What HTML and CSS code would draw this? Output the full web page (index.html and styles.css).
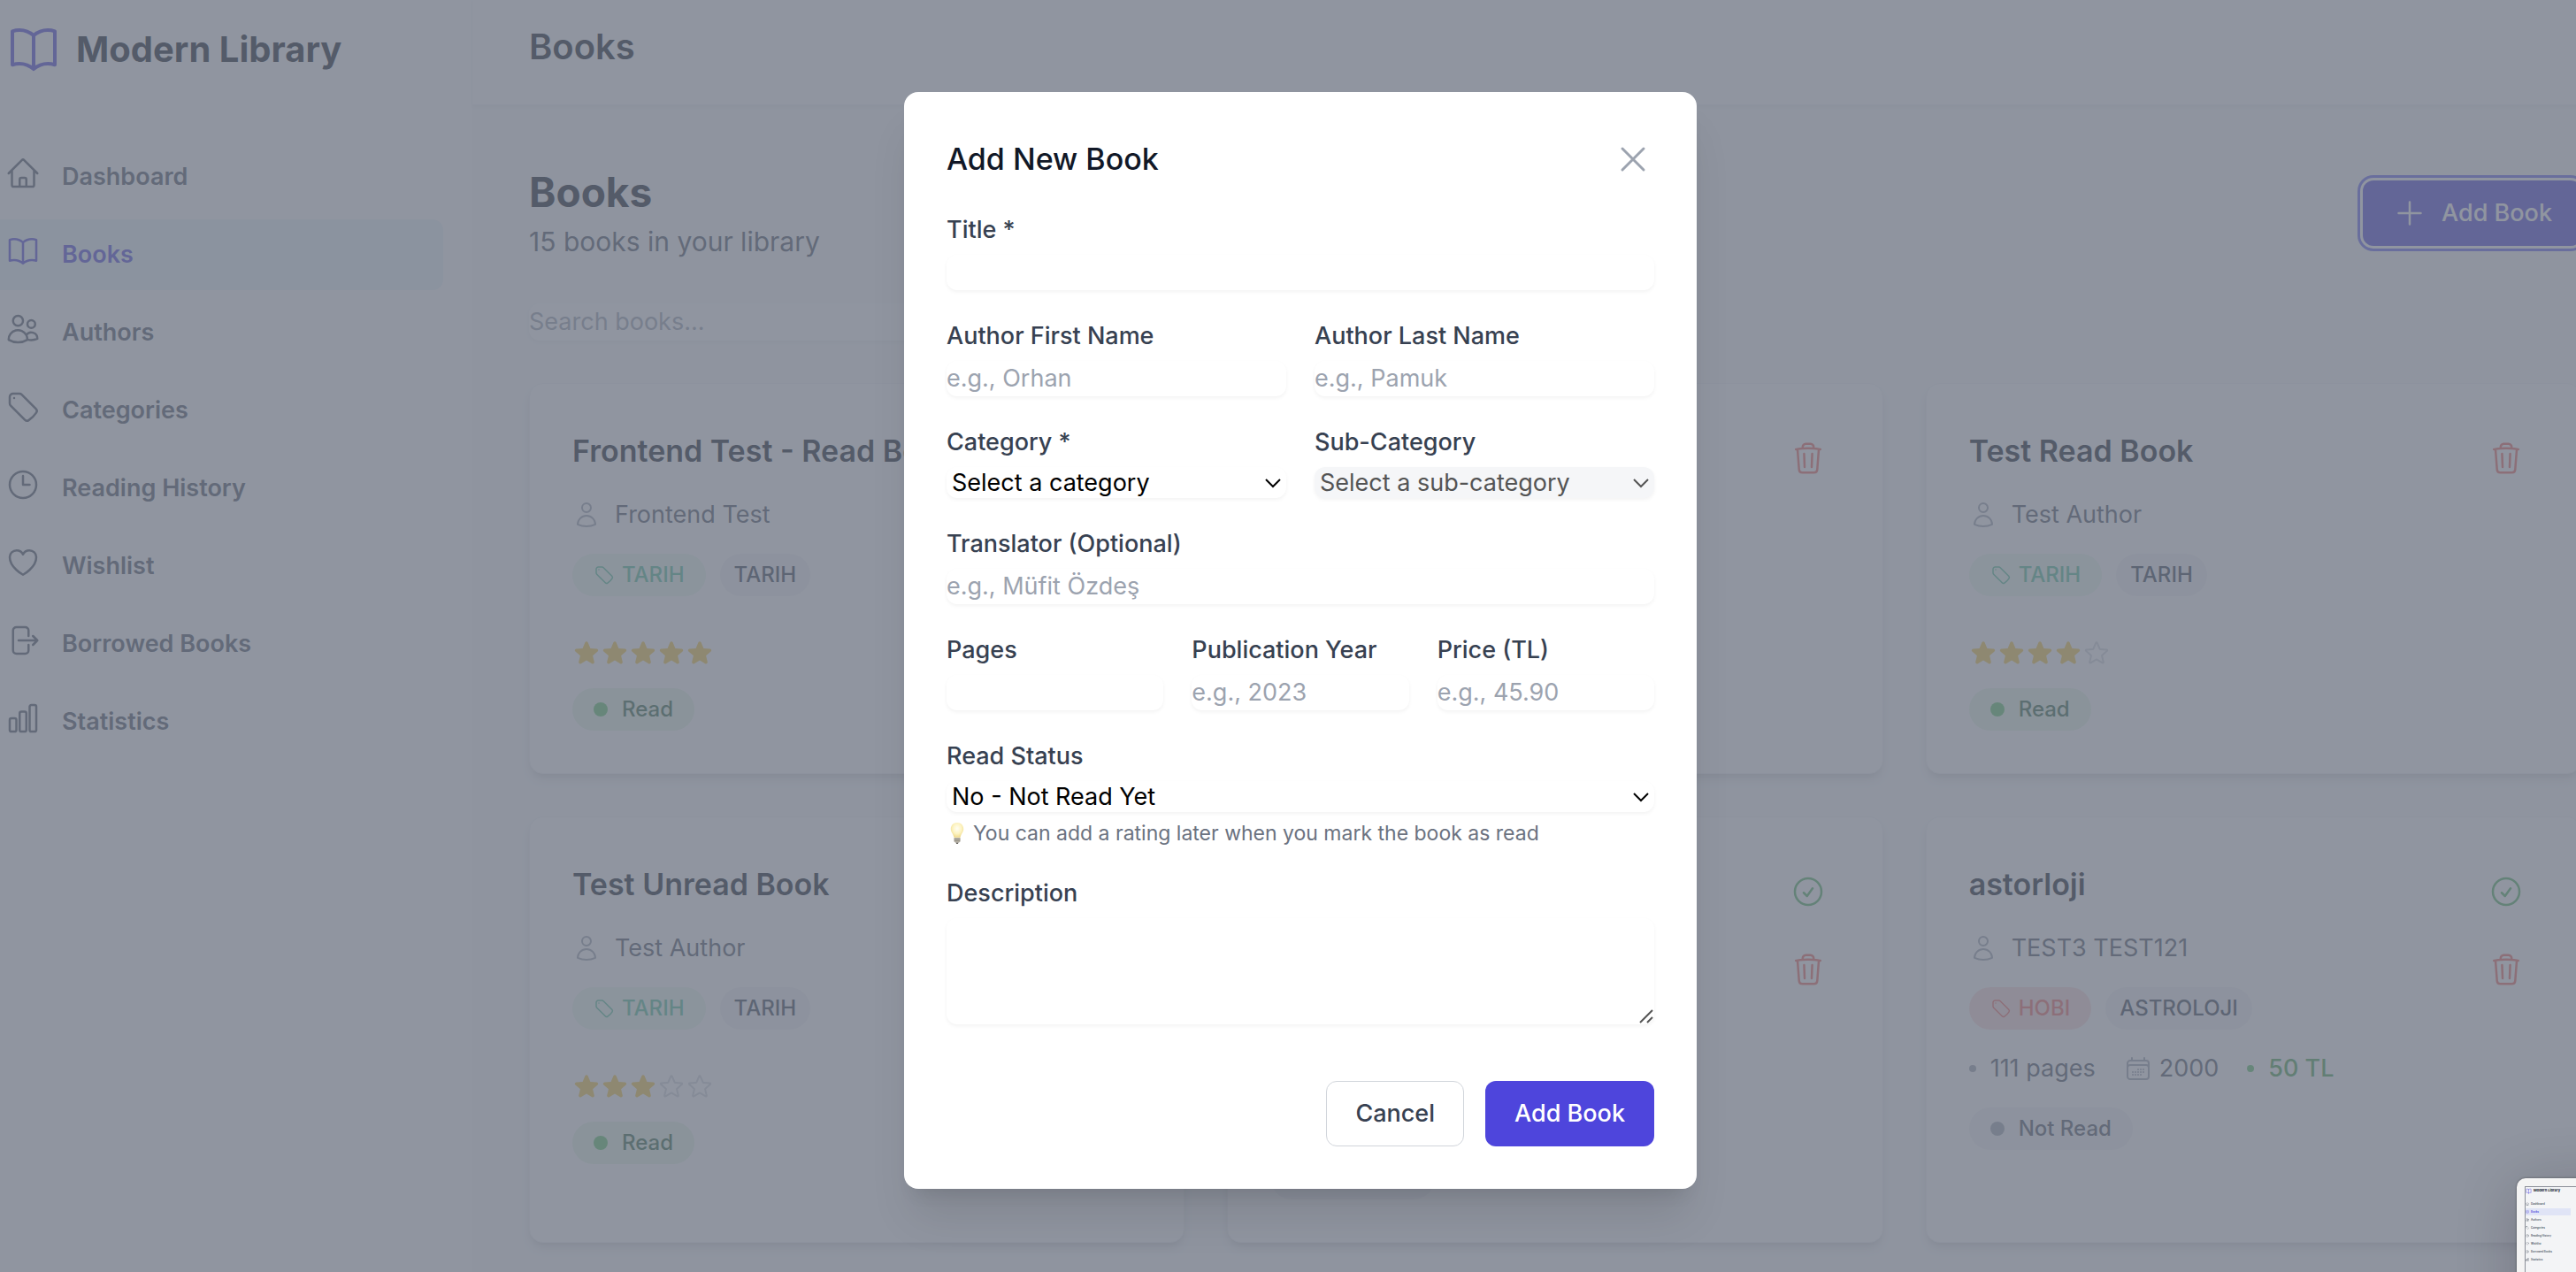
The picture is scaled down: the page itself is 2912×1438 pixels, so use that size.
FILE: index.html
```html
<!DOCTYPE html>
<html lang="en">
<head>
<meta charset="utf-8">
<title>Books - Modern Library</title>
<link rel="stylesheet" href="styles.css">
</head>
<body>
<svg class="sprite" aria-hidden="true">
  <symbol id="i-home" viewBox="0 0 24 24"><path d="m2.25 12 8.954-8.955c.44-.439 1.152-.439 1.591 0L21.75 12M4.5 9.75v10.125c0 .621.504 1.125 1.125 1.125H9.75v-4.875c0-.621.504-1.125 1.125-1.125h2.25c.621 0 1.125.504 1.125 1.125V21h4.125c.621 0 1.125-.504 1.125-1.125V9.75M8.25 21h8.25"/></symbol>
  <symbol id="i-book" viewBox="0 0 24 24"><path d="M12 6.042A8.967 8.967 0 0 0 6 3.75c-1.052 0-2.062.18-3 .512v14.25A8.987 8.987 0 0 1 6 18c2.305 0 4.408.867 6 2.292m0-14.25a8.966 8.966 0 0 1 6-2.292c1.052 0 2.062.18 3 .512v14.25A8.987 8.987 0 0 0 18 18a8.967 8.967 0 0 0-6 2.292m0-14.25v14.25"/></symbol>
  <symbol id="i-users" viewBox="0 0 24 24"><path d="M15 19.128a9.38 9.38 0 0 0 2.625.372 9.337 9.337 0 0 0 4.121-.952 4.125 4.125 0 0 0-7.533-2.493M15 19.128v-.003c0-1.113-.285-2.16-.786-3.07M15 19.128v.106A12.318 12.318 0 0 1 8.624 21c-2.331 0-4.512-.645-6.374-1.766l-.001-.109a6.375 6.375 0 0 1 11.964-3.07M12 6.375a3.375 3.375 0 1 1-6.75 0 3.375 3.375 0 0 1 6.75 0Zm8.25 2.25a2.625 2.625 0 1 1-5.25 0 2.625 2.625 0 0 1 5.25 0Z"/></symbol>
  <symbol id="i-tag" viewBox="0 0 24 24"><path d="M9.568 3H5.25A2.25 2.25 0 0 0 3 5.25v4.318c0 .597.237 1.17.659 1.591l9.581 9.581c.699.699 1.78.872 2.607.33a18.095 18.095 0 0 0 5.223-5.223c.542-.827.369-1.908-.33-2.607L11.16 3.66A2.25 2.25 0 0 0 9.568 3Z"/><path d="M6 6h.008v.008H6V6Z"/></symbol>
  <symbol id="i-clock" viewBox="0 0 24 24"><path d="M12 6v6h4.5m4.5 0a9 9 0 1 1-18 0 9 9 0 0 1 18 0Z"/></symbol>
  <symbol id="i-heart" viewBox="0 0 24 24"><path d="M21 8.25c0-2.485-2.099-4.5-4.688-4.5-1.935 0-3.597 1.126-4.312 2.733-.715-1.607-2.377-2.733-4.313-2.733C5.1 3.75 3 5.765 3 8.25c0 7.22 9 12 9 12s9-4.78 9-12Z"/></symbol>
  <symbol id="i-exit" viewBox="0 0 24 24"><path d="M15.75 9V5.25A2.25 2.25 0 0 0 13.5 3h-6a2.25 2.25 0 0 0-2.25 2.25v13.5A2.25 2.25 0 0 0 7.5 21h6a2.25 2.25 0 0 0 2.25-2.25V15m3 0 3-3m0 0-3-3m3 3H9"/></symbol>
  <symbol id="i-chart" viewBox="0 0 24 24"><path d="M3 13.125C3 12.504 3.504 12 4.125 12h2.25c.621 0 1.125.504 1.125 1.125v6.75C7.5 20.496 6.996 21 6.375 21h-2.25A1.125 1.125 0 0 1 3 19.875v-6.75ZM9.75 8.625c0-.621.504-1.125 1.125-1.125h2.25c.621 0 1.125.504 1.125 1.125v11.25c0 .621-.504 1.125-1.125 1.125h-2.25a1.125 1.125 0 0 1-1.125-1.125V8.625ZM16.5 4.125c0-.621.504-1.125 1.125-1.125h2.25C20.496 3 21 3.504 21 4.125v15.75c0 .621-.504 1.125-1.125 1.125h-2.25a1.125 1.125 0 0 1-1.125-1.125V4.125Z"/></symbol>
  <symbol id="i-user" viewBox="0 0 24 24"><path d="M15.75 6a3.75 3.75 0 1 1-7.5 0 3.75 3.75 0 0 1 7.5 0ZM4.501 20.118a7.5 7.5 0 0 1 14.998 0A17.933 17.933 0 0 1 12 21.75c-2.676 0-5.216-.584-7.499-1.632Z"/></symbol>
  <symbol id="i-star-full" viewBox="0 0 24 24"><path d="M10.788 3.21c.448-1.077 1.976-1.077 2.424 0l2.082 5.006 5.404.434c1.164.093 1.636 1.545.749 2.305l-4.117 3.527 1.257 5.273c.271 1.136-.964 2.033-1.96 1.425L12 18.354 7.373 21.18c-.996.608-2.231-.29-1.96-1.425l1.257-5.273-4.117-3.527c-.887-.76-.415-2.212.749-2.305l5.404-.434 2.082-5.005Z"/></symbol>
  <symbol id="i-star" viewBox="0 0 24 24"><path d="M11.48 3.499a.562.562 0 0 1 1.04 0l2.125 5.111a.563.563 0 0 0 .475.345l5.518.442c.499.04.701.663.321.988l-4.204 3.602a.563.563 0 0 0-.182.557l1.285 5.385a.562.562 0 0 1-.84.61l-4.725-2.885a.562.562 0 0 0-.586 0L6.982 20.54a.562.562 0 0 1-.84-.61l1.285-5.386a.562.562 0 0 0-.182-.557l-4.204-3.602a.562.562 0 0 1 .321-.988l5.518-.442a.563.563 0 0 0 .475-.345L11.48 3.5Z"/></symbol>
  <symbol id="i-trash" viewBox="0 0 24 24"><path d="m14.74 9-.346 9m-4.788 0L9.26 9m9.968-3.21c.342.052.682.107 1.022.166m-1.022-.165L18.16 19.673a2.25 2.25 0 0 1-2.244 2.077H8.084a2.25 2.25 0 0 1-2.244-2.077L4.772 5.79m14.456 0a48.108 48.108 0 0 0-3.478-.397m-12 .562c.34-.059.68-.114 1.022-.165m0 0a48.11 48.11 0 0 1 3.478-.397m7.5 0v-.916c0-1.18-.91-2.164-2.09-2.201a51.964 51.964 0 0 0-3.32 0c-1.18.037-2.09 1.022-2.09 2.201v.916m7.5 0a48.667 48.667 0 0 0-7.5 0"/></symbol>
  <symbol id="i-check" viewBox="0 0 24 24"><path d="M9 12.75 11.25 15 15 9.75M21 12a9 9 0 1 1-18 0 9 9 0 0 1 18 0Z"/></symbol>
  <symbol id="i-calendar" viewBox="0 0 24 24"><path d="M6.75 3v2.25M17.25 3v2.25M3 18.75V7.5a2.25 2.25 0 0 1 2.25-2.25h13.5A2.25 2.25 0 0 1 21 7.5v11.25m-18 0A2.25 2.25 0 0 0 5.25 21h13.5A2.25 2.25 0 0 0 21 18.75m-18 0v-7.5A2.25 2.25 0 0 1 5.25 9h13.5A2.25 2.25 0 0 1 21 11.25v7.5m-9-6h.008v.008H12v-.008ZM12 15h.008v.008H12V15Zm0 2.25h.008v.008H12v-.008ZM9.75 15h.008v.008H9.75V15Zm0 2.25h.008v.008H9.75v-.008ZM7.5 15h.008v.008H7.5V15Zm0 2.25h.008v.008H7.5v-.008Zm6.75-4.5h.008v.008h-.008v-.008Zm0 2.25h.008v.008h-.008V15Zm0 2.25h.008v.008h-.008v-.008Zm2.25-4.5h.008v.008H16.5v-.008Zm0 2.25h.008v.008H16.5V15Z"/></symbol>
  <symbol id="i-plus" viewBox="0 0 24 24"><path d="M12 4.5v15m7.5-7.5h-15"/></symbol>
  <symbol id="i-close" viewBox="0 0 24 24"><path d="M6 18 18 6M6 6l12 12"/></symbol>
  <symbol id="i-chevron" viewBox="0 0 20 12"><path d="M2 2l8 8 8-8"/></symbol>
</svg>

<div class="app">
  <aside class="sidebar">
    <div class="brand">
      <svg class="icon brand-icon"><use href="#i-book"/></svg>
      <span class="brand-name">Modern Library</span>
    </div>
    <nav class="nav">
      <a class="nav-link" href="#dashboard"><svg class="icon icon-40"><use href="#i-home"/></svg>Dashboard</a>
      <a class="nav-link is-active" href="#books" aria-current="page"><svg class="icon icon-40"><use href="#i-book"/></svg>Books</a>
      <a class="nav-link" href="#authors"><svg class="icon icon-40"><use href="#i-users"/></svg>Authors</a>
      <a class="nav-link" href="#categories"><svg class="icon icon-40"><use href="#i-tag"/></svg>Categories</a>
      <a class="nav-link" href="#history"><svg class="icon icon-40"><use href="#i-clock"/></svg>Reading History</a>
      <a class="nav-link" href="#wishlist"><svg class="icon icon-40"><use href="#i-heart"/></svg>Wishlist</a>
      <a class="nav-link" href="#borrowed"><svg class="icon icon-40"><use href="#i-exit"/></svg>Borrowed Books</a>
      <a class="nav-link" href="#statistics"><svg class="icon icon-40"><use href="#i-chart"/></svg>Statistics</a>
    </nav>
  </aside>

  <div class="page">
    <header class="topbar"><span class="topbar-title">Books</span></header>
    <main class="content">
      <div class="page-head">
        <div>
          <h1 class="page-title">Books</h1>
          <p class="page-subtitle">15 books in your library</p>
        </div>
        <button class="btn btn-primary btn-focus" type="button"><svg class="icon icon-40"><use href="#i-plus"/></svg>Add Book</button>
      </div>
      <input class="search" type="search" placeholder="Search books..." aria-label="Search books">

      <div class="book-grid">
        <article class="card">
          <div class="card-main">
            <h2 class="card-title">Frontend Test - Read Book</h2>
            <p class="author"><svg class="icon icon-32"><use href="#i-user"/></svg>Frontend Test</p>
            <div class="tags"><span class="pill pill-green"><svg class="icon icon-24"><use href="#i-tag"/></svg>TARIH</span><span class="pill pill-sub">TARIH</span></div>
            <div class="stars" role="img" aria-label="5 of 5"><svg class="star-full"><use href="#i-star-full"/></svg><svg class="star-full"><use href="#i-star-full"/></svg><svg class="star-full"><use href="#i-star-full"/></svg><svg class="star-full"><use href="#i-star-full"/></svg><svg class="star-full"><use href="#i-star-full"/></svg></div>
            <span class="pill pill-read"><i class="dot"></i>Read</span>
          </div>
        </article>
        <article class="card">
          <div class="card-main"></div>
          <div class="card-actions"><button class="icon-btn is-delete" type="button" aria-label="Delete"><svg class="icon icon-40"><use href="#i-trash"/></svg></button></div>
        </article>
        <article class="card">
          <div class="card-main">
            <h2 class="card-title">Test Read Book</h2>
            <p class="author"><svg class="icon icon-32"><use href="#i-user"/></svg>Test Author</p>
            <div class="tags"><span class="pill pill-green"><svg class="icon icon-24"><use href="#i-tag"/></svg>TARIH</span><span class="pill pill-sub">TARIH</span></div>
            <div class="stars" role="img" aria-label="4 of 5"><svg class="star-full"><use href="#i-star-full"/></svg><svg class="star-full"><use href="#i-star-full"/></svg><svg class="star-full"><use href="#i-star-full"/></svg><svg class="star-full"><use href="#i-star-full"/></svg><svg class="icon star-empty"><use href="#i-star"/></svg></div>
            <span class="pill pill-read"><i class="dot"></i>Read</span>
          </div>
          <div class="card-actions"><button class="icon-btn is-delete" type="button" aria-label="Delete"><svg class="icon icon-40"><use href="#i-trash"/></svg></button></div>
        </article>

        <article class="card">
          <div class="card-main">
            <h2 class="card-title">Test Unread Book</h2>
            <p class="author"><svg class="icon icon-32"><use href="#i-user"/></svg>Test Author</p>
            <div class="tags"><span class="pill pill-green"><svg class="icon icon-24"><use href="#i-tag"/></svg>TARIH</span><span class="pill pill-sub">TARIH</span></div>
            <div class="stars" role="img" aria-label="3 of 5"><svg class="star-full"><use href="#i-star-full"/></svg><svg class="star-full"><use href="#i-star-full"/></svg><svg class="star-full"><use href="#i-star-full"/></svg><svg class="icon star-empty"><use href="#i-star"/></svg><svg class="icon star-empty"><use href="#i-star"/></svg></div>
            <span class="pill pill-read"><i class="dot"></i>Read</span>
          </div>
        </article>
        <article class="card card-tall">
          <div class="card-main card-main-end"><span class="pill pill-unread"><i class="dot"></i>Not Read</span></div>
          <div class="card-actions">
            <button class="icon-btn is-done" type="button" aria-label="Mark as read"><svg class="icon icon-40"><use href="#i-check"/></svg></button>
            <button class="icon-btn is-delete" type="button" aria-label="Delete"><svg class="icon icon-40"><use href="#i-trash"/></svg></button>
          </div>
        </article>
        <article class="card">
          <div class="card-main">
            <h2 class="card-title">astorloji</h2>
            <p class="author"><svg class="icon icon-32"><use href="#i-user"/></svg>TEST3 TEST121</p>
            <div class="tags"><span class="pill pill-red"><svg class="icon icon-24"><use href="#i-tag"/></svg>HOBI</span><span class="pill pill-sub">ASTROLOJI</span></div>
            <div class="meta">
              <span class="meta-item"><i class="bullet"></i>111 pages</span>
              <span class="meta-item meta-date"><svg class="icon icon-32"><use href="#i-calendar"/></svg>2000</span>
              <span class="meta-item meta-price"><i class="bullet"></i>50 TL</span>
            </div>
            <span class="pill pill-unread"><i class="dot"></i>Not Read</span>
          </div>
          <div class="card-actions">
            <button class="icon-btn is-done" type="button" aria-label="Mark as read"><svg class="icon icon-40"><use href="#i-check"/></svg></button>
            <button class="icon-btn is-delete" type="button" aria-label="Delete"><svg class="icon icon-40"><use href="#i-trash"/></svg></button>
          </div>
        </article>
      </div>
    </main>
  </div>

  <div class="backdrop">
    <section class="dialog" role="dialog" aria-modal="true" aria-labelledby="dialog-title">
      <div class="dialog-head">
        <h2 class="dialog-title" id="dialog-title">Add New Book</h2>
        <button class="close-btn" type="button" aria-label="Close"><svg class="icon icon-48"><use href="#i-close"/></svg></button>
      </div>
      <form class="form">
        <div class="field"><label for="title">Title *</label><input class="control" id="title" type="text"></div>
        <div class="row row-2">
          <div class="field"><label for="first">Author First Name</label><input class="control" id="first" type="text" placeholder="e.g., Orhan"></div>
          <div class="field"><label for="last">Author Last Name</label><input class="control" id="last" type="text" placeholder="e.g., Pamuk"></div>
        </div>
        <div class="row row-2">
          <div class="field"><label for="category">Category *</label>
            <div class="select-wrap"><select class="select" id="category"><option>Select a category</option></select><svg class="chevron"><use href="#i-chevron"/></svg></div></div>
          <div class="field"><label for="sub">Sub-Category</label>
            <div class="select-wrap is-disabled"><select class="select" id="sub" disabled><option>Select a sub-category</option></select><svg class="chevron"><use href="#i-chevron"/></svg></div></div>
        </div>
        <div class="field"><label for="translator">Translator (Optional)</label><input class="control" id="translator" type="text" placeholder="e.g., Müfit Özdeş"></div>
        <div class="row row-3">
          <div class="field"><label for="pages">Pages</label><input class="control" id="pages" type="text"></div>
          <div class="field"><label for="year">Publication Year</label><input class="control" id="year" type="text" placeholder="e.g., 2023"></div>
          <div class="field"><label for="price">Price (TL)</label><input class="control" id="price" type="text" placeholder="e.g., 45.90"></div>
        </div>
        <div class="field"><label for="status">Read Status</label>
          <div class="select-wrap"><select class="select" id="status"><option>No - Not Read Yet</option></select><svg class="chevron"><use href="#i-chevron"/></svg></div>
          <p class="hint">
            <svg class="bulb" viewBox="0 0 24 24" aria-hidden="true">
              <defs><radialGradient id="glow" cx=".5" cy=".4" r=".6"><stop offset="0" stop-color="#fffef4"/><stop offset=".6" stop-color="#fdf3c0"/><stop offset="1" stop-color="#efd98a"/></radialGradient></defs>
              <path d="M12 0C7.600 0 4.800 3.200 4.800 7.200c0 3.400 2.800 5.400 3.600 9.600h7.200c.8-4.200 3.600-6.200 3.600-9.600C19.200 3.200 16.400 0 12 0Z" fill="url(#glow)"/>
              <path d="M8.500 17h7v4c0 .8-.8 1.400-1.600 1.400h-3.800c-.8 0-1.600-.6-1.600-1.400Z" fill="#b9b4a8"/>
              <path d="M8.500 18.800h7M8.700 20.600h6.600" stroke="#8d897f" stroke-width=".8"/>
              <path d="M10.400 22.400h3.200l-.8 1.600h-1.600Z" fill="#5f5b54"/>
            </svg>You can add a rating later when you mark the book as read</p>
        </div>
        <div class="field"><label for="description">Description</label>
          <div class="area-wrap"><textarea class="control area" id="description"></textarea>
            <svg class="grip" viewBox="0 0 16 16" aria-hidden="true"><path d="M1 15 15 1M9 15l6-6"/></svg></div>
        </div>
        <div class="form-actions">
          <button class="btn btn-plain" type="button">Cancel</button>
          <button class="btn btn-primary" type="submit">Add Book</button>
        </div>
      </form>
    </section>
  </div>
</div>

<div class="preview" aria-hidden="true">
  <div class="preview-screen">
    <div class="preview-side">
      <div class="preview-brand"><svg class="icon preview-logo"><use href="#i-book"/></svg>Modern Library</div>
      <div class="preview-item"><svg class="icon preview-icon"><use href="#i-home"/></svg>Dashboard</div>
      <div class="preview-item is-active"><svg class="icon preview-icon"><use href="#i-book"/></svg>Books</div>
      <div class="preview-item"><svg class="icon preview-icon"><use href="#i-users"/></svg>Authors</div>
      <div class="preview-item"><svg class="icon preview-icon"><use href="#i-tag"/></svg>Categories</div>
      <div class="preview-item"><svg class="icon preview-icon"><use href="#i-clock"/></svg>Reading History</div>
      <div class="preview-item"><svg class="icon preview-icon"><use href="#i-heart"/></svg>Wishlist</div>
      <div class="preview-item"><svg class="icon preview-icon"><use href="#i-exit"/></svg>Borrowed Books</div>
      <div class="preview-item"><svg class="icon preview-icon"><use href="#i-chart"/></svg>Statistics</div>
    </div>
  </div>
</div>
</body>
</html>
```
FILE: styles.css
```css
* { box-sizing: border-box; }

body {
  margin: 0;
  height: 100vh;
  overflow: hidden;
  background: #f9fafb;
  color: #111827;
  font-family: Inter, "Liberation Sans", sans-serif;
  font-size: 27px;
  line-height: 48px;
}

h1, h2, p { margin: 0; }
button, input, select, textarea { font: inherit; }
button { cursor: pointer; }

.sprite { display: none; }

.icon {
  display: block;
  flex: none;
  fill: none;
  stroke: currentColor;
  stroke-width: 1.5;
  stroke-linecap: round;
  stroke-linejoin: round;
}
.icon-24 { width: 24px; height: 24px; }
.icon-32 { width: 32px; height: 32px; }
.icon-40 { width: 40px; height: 40px; }
.icon-48 { width: 48px; height: 48px; }

/* Shell: a little wider than the window, so the right edge runs off screen */
.app {
  position: relative;
  display: flex;
  width: calc(100% + 28px);
  min-height: 100vh;
}

.sidebar {
  flex: none;
  width: 534px;
  background: #fff;
  border-right: 1px solid #f9fafb;
}
.brand {
  display: flex;
  align-items: center;
  gap: 16px;
  padding: 24px 0 72px 6px;
}
.brand-icon { width: 64px; height: 64px; color: #4e45dc; }
.brand-name { font-size: 40px; font-weight: 700; line-height: 56px; }

.nav {
  display: flex;
  flex-direction: column;
  gap: 8px;
  padding-right: 32px;
}
.nav-link {
  display: flex;
  align-items: flex-start;
  gap: 24px;
  padding: 16px 6px;
  border-radius: 0 12px 12px 0;
  color: #4b5563;
  font-weight: 600;
  text-decoration: none;
}
.nav-link.is-active { background: #ebf5fa; color: #4e45dc; }

.page { flex: 1; min-width: 0; }
.topbar {
  padding: 25px 64px 37px;
  background: #fff;
  border-bottom: 1px solid #f3f4f6;
  box-shadow: 0 2px 4px rgba(0, 0, 0, .05);
}
.topbar-title { display: block; font-size: 40px; font-weight: 600; line-height: 56px; }

.content { padding: 66px 22px 48px 64px; }
.page-head { display: flex; align-items: center; justify-content: space-between; }
.page-title { font-size: 46px; font-weight: 700; line-height: 64px; }
.page-subtitle { color: #4b5563; font-size: 30px; }

.search {
  display: block;
  width: 896px;
  height: 42px;
  margin: 46px 0 48px;
  padding: 0;
  border: 0;
  border-radius: 12px;
  background: #fff;
  box-shadow: 0 2px 4px rgba(0, 0, 0, .05);
}
.search::placeholder, .control::placeholder { color: #9ca3af; opacity: 1; }

.btn {
  display: flex;
  align-items: center;
  gap: 16px;
  padding: 16px 32px;
  border: 1px solid transparent;
  border-radius: 12px;
  font-weight: 500;
  line-height: 40px;
}
.btn-primary { background: #4e45dc; color: #fff; }
.btn-plain { background: #fff; border-color: #d1d5db; color: #374151; }
.btn-focus { box-shadow: 0 0 0 3px #fff, 0 0 0 6px #6366f1; }

/* Book cards */
.book-grid {
  display: grid;
  grid-template-columns: repeat(3, 1fr);
  gap: 48px;
}
.card {
  display: flex;
  padding: 48px;
  border: 1px solid #f3f4f6;
  border-radius: 16px;
  background: #fff;
  box-shadow: 0 8px 12px -2px rgba(0, 0, 0, .1), 0 4px 8px -4px rgba(0, 0, 0, .1);
}
.card-tall { min-height: 482px; }
.card-main { flex: 1; min-width: 0; }
.card-main-end { display: flex; align-items: flex-end; }
.card-title { margin-bottom: 20px; font-size: 34px; font-weight: 600; line-height: 56px; white-space: nowrap; }
.author {
  display: flex;
  align-items: center;
  gap: 16px;
  margin-bottom: 20px;
  color: #4b5563;
}
.author .icon { color: #9ca3af; }
.tags { display: flex; gap: 16px; }

.pill {
  display: inline-flex;
  align-items: center;
  gap: 8px;
  padding: 0 24px;
  border-radius: 24px;
  font-size: 24px;
  font-weight: 500;
  vertical-align: top;
}
.pill-green { background: #e9f9ee; color: #52c096; }
.pill-red { background: #fcdcdc; color: #f06a64; }
.pill-sub { padding: 0 16px; background: #f3f4f6; color: #374151; }
.pill-read { gap: 16px; background: #e5f8e6; color: #306644; }
.pill-unread { gap: 16px; background: #f3f4f6; color: #4b5563; }
.dot { width: 16px; height: 16px; border-radius: 50%; background: #5cc468; }
.pill-unread .dot { background: #9ca3af; }

.stars { display: flex; margin: 48px 0 24px; }
.stars svg { width: 32px; height: 32px; }
.star-full { fill: #f7cc46; }
.star-empty { color: #d1d5db; }

.meta { display: flex; gap: 32px; margin: 20px 0; color: #4b5563; }
.meta-item { display: flex; align-items: center; gap: 16px; }
.meta-date { gap: 8px; }
.meta-date .icon { color: #9ca3af; }
.bullet { width: 8px; height: 8px; border-radius: 50%; background: #9ca3af; }
.meta-price { color: #4aa450; font-weight: 500; }
.meta-price .bullet { background: #5cc468; }

.card-actions { display: flex; flex-direction: column; gap: 16px; }
.icon-btn { padding: 16px; border: 0; background: none; }
.is-delete { color: #ee6a60; }
.is-done { color: #50b460; }

/* Dialog */
.backdrop {
  position: absolute;
  inset: 0;
  display: flex;
  align-items: flex-start;
  justify-content: center;
  padding-top: 104px;
  background: rgba(107, 114, 128, .75);
}
.dialog {
  width: 896px;
  padding: 48px;
  border-radius: 16px;
  background: #fff;
  box-shadow: 0 40px 50px -10px rgba(0, 0, 0, .1), 0 16px 20px -12px rgba(0, 0, 0, .1);
}
.dialog-head {
  display: flex;
  align-items: center;
  justify-content: space-between;
  margin-bottom: 32px;
}
.dialog-title { font-size: 34px; font-weight: 500; line-height: 56px; }
.close-btn { padding: 0; border: 0; background: none; color: #9ca3af; }

.form { display: flex; flex-direction: column; gap: 32px; }
.row { display: grid; gap: 32px; }
.row-2 { grid-template-columns: repeat(2, 1fr); }
.row-3 { grid-template-columns: repeat(3, 1fr); }
.field { display: flex; flex-direction: column; gap: 8px; min-width: 0; line-height: 40px; }
.field label { color: #374151; font-weight: 500; }

.control {
  display: block;
  width: 100%;
  height: 40px;
  padding: 0;
  border: 0;
  border-radius: 12px;
  background: #fff;
  box-shadow: 0 2px 4px rgba(0, 0, 0, .05);
}
.select-wrap { position: relative; }
.select {
  display: block;
  width: 100%;
  height: 35px;
  padding: 0 40px 0 6px;
  border: 0;
  border-radius: 12px;
  appearance: none;
  background: #fff;
  box-shadow: 0 2px 4px rgba(0, 0, 0, .05);
  color: #000;
  line-height: 35px;
  opacity: 1;
}
.is-disabled .select { background: #f5f6f8; color: #545454; }
.chevron {
  position: absolute;
  top: 12px;
  right: 5px;
  width: 20px;
  height: 12px;
  fill: none;
  stroke: #000;
  stroke-width: 2;
  pointer-events: none;
}
.is-disabled .chevron { stroke: #545454; }

.hint {
  display: flex;
  align-items: center;
  gap: 6px;
  color: #6b7280;
  font-size: 23px;
  line-height: 32px;
}
.bulb { width: 24px; height: 24px; }

.area-wrap { position: relative; }
.area { height: 120px; resize: none; }
.grip {
  position: absolute;
  right: 1px;
  bottom: 1px;
  width: 16px;
  height: 16px;
  fill: none;
  stroke: #555;
  stroke-width: 2;
}
.form-actions { display: flex; justify-content: flex-end; gap: 24px; padding-top: 32px; }

/* Floating window preview, docked past the bottom right corner */
.preview {
  position: fixed;
  right: -140px;
  bottom: -60px;
  width: 207px;
  height: 166px;
  padding: 9px;
  border-radius: 10px;
  background: #f4f4f4;
  box-shadow: 0 0 3px rgba(0, 0, 0, .4), 0 10px 70px rgba(20, 10, 20, .2);
}
.preview-screen {
  height: 100%;
  border: 1px solid #8b8f98;
  background: #f3f4f6;
}
.preview-side { width: 53px; }
.preview-brand {
  display: flex;
  align-items: center;
  gap: 2px;
  margin-bottom: 7px;
  font-size: 4px;
  font-weight: 700;
  line-height: 8px;
  white-space: nowrap;
}
.preview-logo { width: 7px; height: 7px; color: #4e45dc; }
.preview-item {
  display: flex;
  align-items: center;
  gap: 2px;
  height: 8px;
  margin: 0 2px 1px 0;
  color: #4b5563;
  font-size: 3px;
  font-weight: 600;
  line-height: 8px;
  white-space: nowrap;
}
.preview-item.is-active { background: #e0e4f6; color: #4e45dc; }
.preview-icon { width: 4px; height: 4px; }
```
